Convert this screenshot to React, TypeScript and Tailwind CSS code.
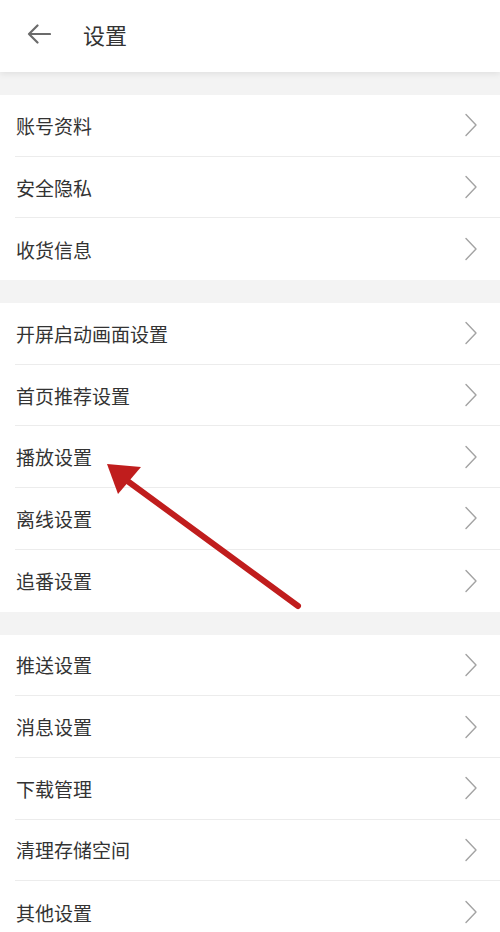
const sections: string[][] = [
  ["账号资料", "安全隐私", "收货信息"],
  ["开屏启动画面设置", "首页推荐设置", "播放设置", "离线设置", "追番设置"],
  ["推送设置", "消息设置", "下载管理", "清理存储空间", "其他设置"],
];

function Chevron() {
  return (
    <svg width="14" height="24" viewBox="0 0 14 24" fill="none" className="shrink-0">
      <path d="M2 1.5 L12 12 L2 22.5" stroke="#a3a3a3" strokeWidth="1.4" strokeLinecap="round" strokeLinejoin="round" />
    </svg>
  );
}

function Row({ label, last }: { label: string; last: boolean }) {
  return (
    <div className="pl-[15px] bg-white">
      <div
        className={
          "h-[61.7px] flex items-center justify-between pr-[22px] " +
          (last ? "" : "border-b border-[#ececec]")
        }
      >
        <span className="pl-[1px] text-[19px] text-[#333333] leading-none">{label}</span>
        <Chevron />
      </div>
    </div>
  );
}

export default function App() {
  return (
    <div
      className="relative w-[500px] h-[932px] overflow-hidden bg-[#f3f3f3]"
      style={{ fontFamily: '"Noto Sans CJK SC", "Noto Sans", sans-serif' }}
    >
      <header className="relative z-10 h-[72px] bg-white flex items-center pb-[5px] shadow-[0_2px_6px_rgba(0,0,0,0.08)]">
        <div className="w-[83px] flex items-center pl-[27px]">
          <svg width="24" height="20" viewBox="0 0 24 20" fill="none">
            <path d="M23 10 H2 M10.5 1.5 L2 10 L10.5 18.5" stroke="#6b6b6b" strokeWidth="2.2" strokeLinecap="round" strokeLinejoin="round" />
          </svg>
        </div>
        <span className="text-[22px] text-[#333333] leading-none">设置</span>
      </header>

      <div className="flex flex-col gap-[23px] pt-[23px]">
        {sections.map((items, i) => (
          <div key={i} className="bg-white">
            {items.map((label, j) => (
              <Row key={label} label={label} last={j === items.length - 1} />
            ))}
          </div>
        ))}
      </div>

      <svg
        className="absolute left-0 top-0 pointer-events-none"
        width="500"
        height="932"
        viewBox="0 0 500 932"
      >
        <line x1="298" y1="606" x2="122" y2="477" stroke="#c01d1d" strokeWidth="6" strokeLinecap="round" />
        <polygon points="107,464 141,467 118,494" fill="#c01d1d" />
      </svg>
    </div>
  );
}
